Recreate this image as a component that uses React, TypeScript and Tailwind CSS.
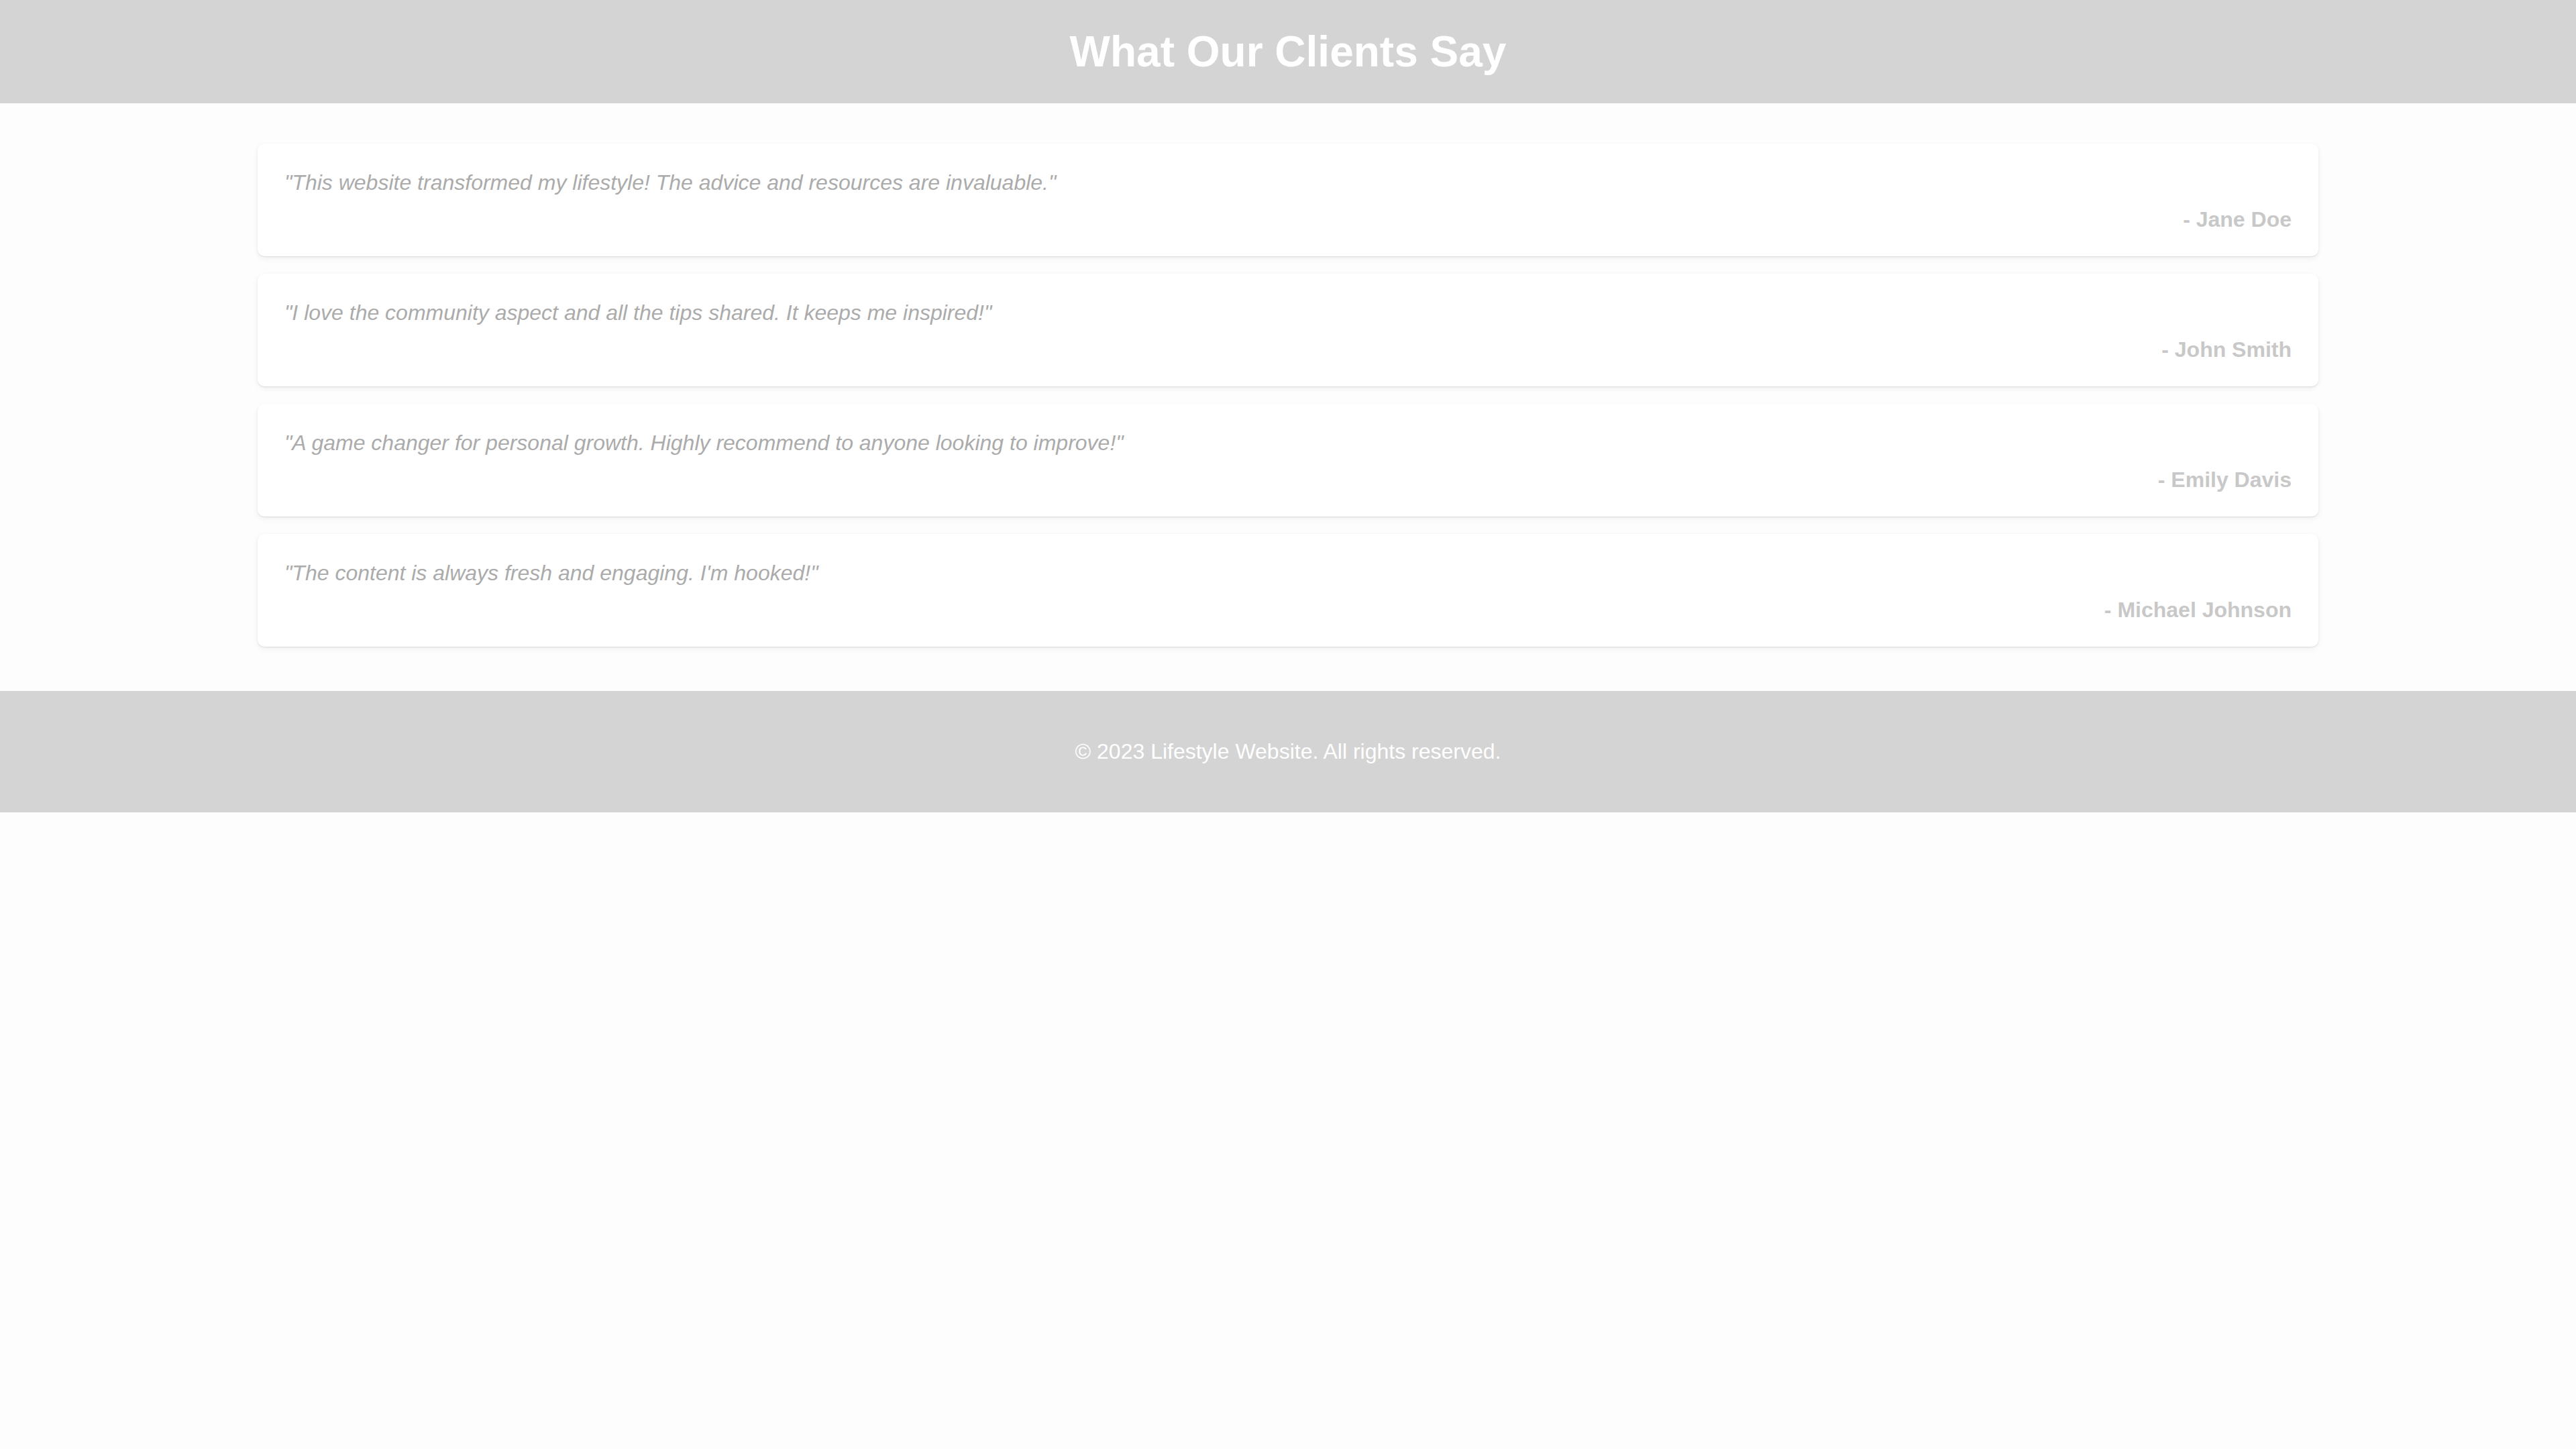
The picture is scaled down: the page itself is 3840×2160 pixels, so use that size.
import React from 'react';

const testimonials = [
  { quote: '"This website transformed my lifestyle! The advice and resources are invaluable."', author: '- Jane Doe' },
  { quote: '"I love the community aspect and all the tips shared. It keeps me inspired!"', author: '- John Smith' },
  { quote: '"A game changer for personal growth. Highly recommend to anyone looking to improve!"', author: '- Emily Davis' },
  { quote: '"The content is always fresh and engaging. I\'m hooked!"', author: '- Michael Johnson' },
];

const App: React.FC = () => {
  return (
    <div className="min-h-screen bg-[#fdfdfd] text-[32px]" style={{ fontFamily: '"Liberation Sans", Arial, sans-serif' }}>
      {/* header */}
      <header className="bg-[#d4d4d4] py-[40px] text-center">
        <h1 className="text-[64px] font-bold leading-[74px] text-white">What Our Clients Say</h1>
      </header>

      {/* testimonials */}
      <main className="pt-[40px] pb-[46px]">
        <div className="w-[80%] mx-auto flex flex-col gap-[26px] py-[20px]">
          {testimonials.map((t) => (
            <div
              key={t.author}
              className="bg-white rounded-[10px] pt-[40px] pb-[36px] px-[40px] shadow-[0_3px_10px_rgba(0,0,0,0.06),0_1px_2px_rgba(0,0,0,0.1)]"
            >
              <p className="italic text-[#ababab] leading-[37px] mb-[18px]">{t.quote}</p>
              <p className="font-bold text-[#c8c8c8] leading-[37px] text-right">{t.author}</p>
            </div>
          ))}
        </div>
      </main>

      {/* footer */}
      <footer className="bg-[#d4d4d4] py-[40px] text-center">
        <p className="my-[32px] leading-[37px] text-white">© 2023 Lifestyle Website. All rights reserved.</p>
      </footer>
    </div>
  );
};

export default App;
